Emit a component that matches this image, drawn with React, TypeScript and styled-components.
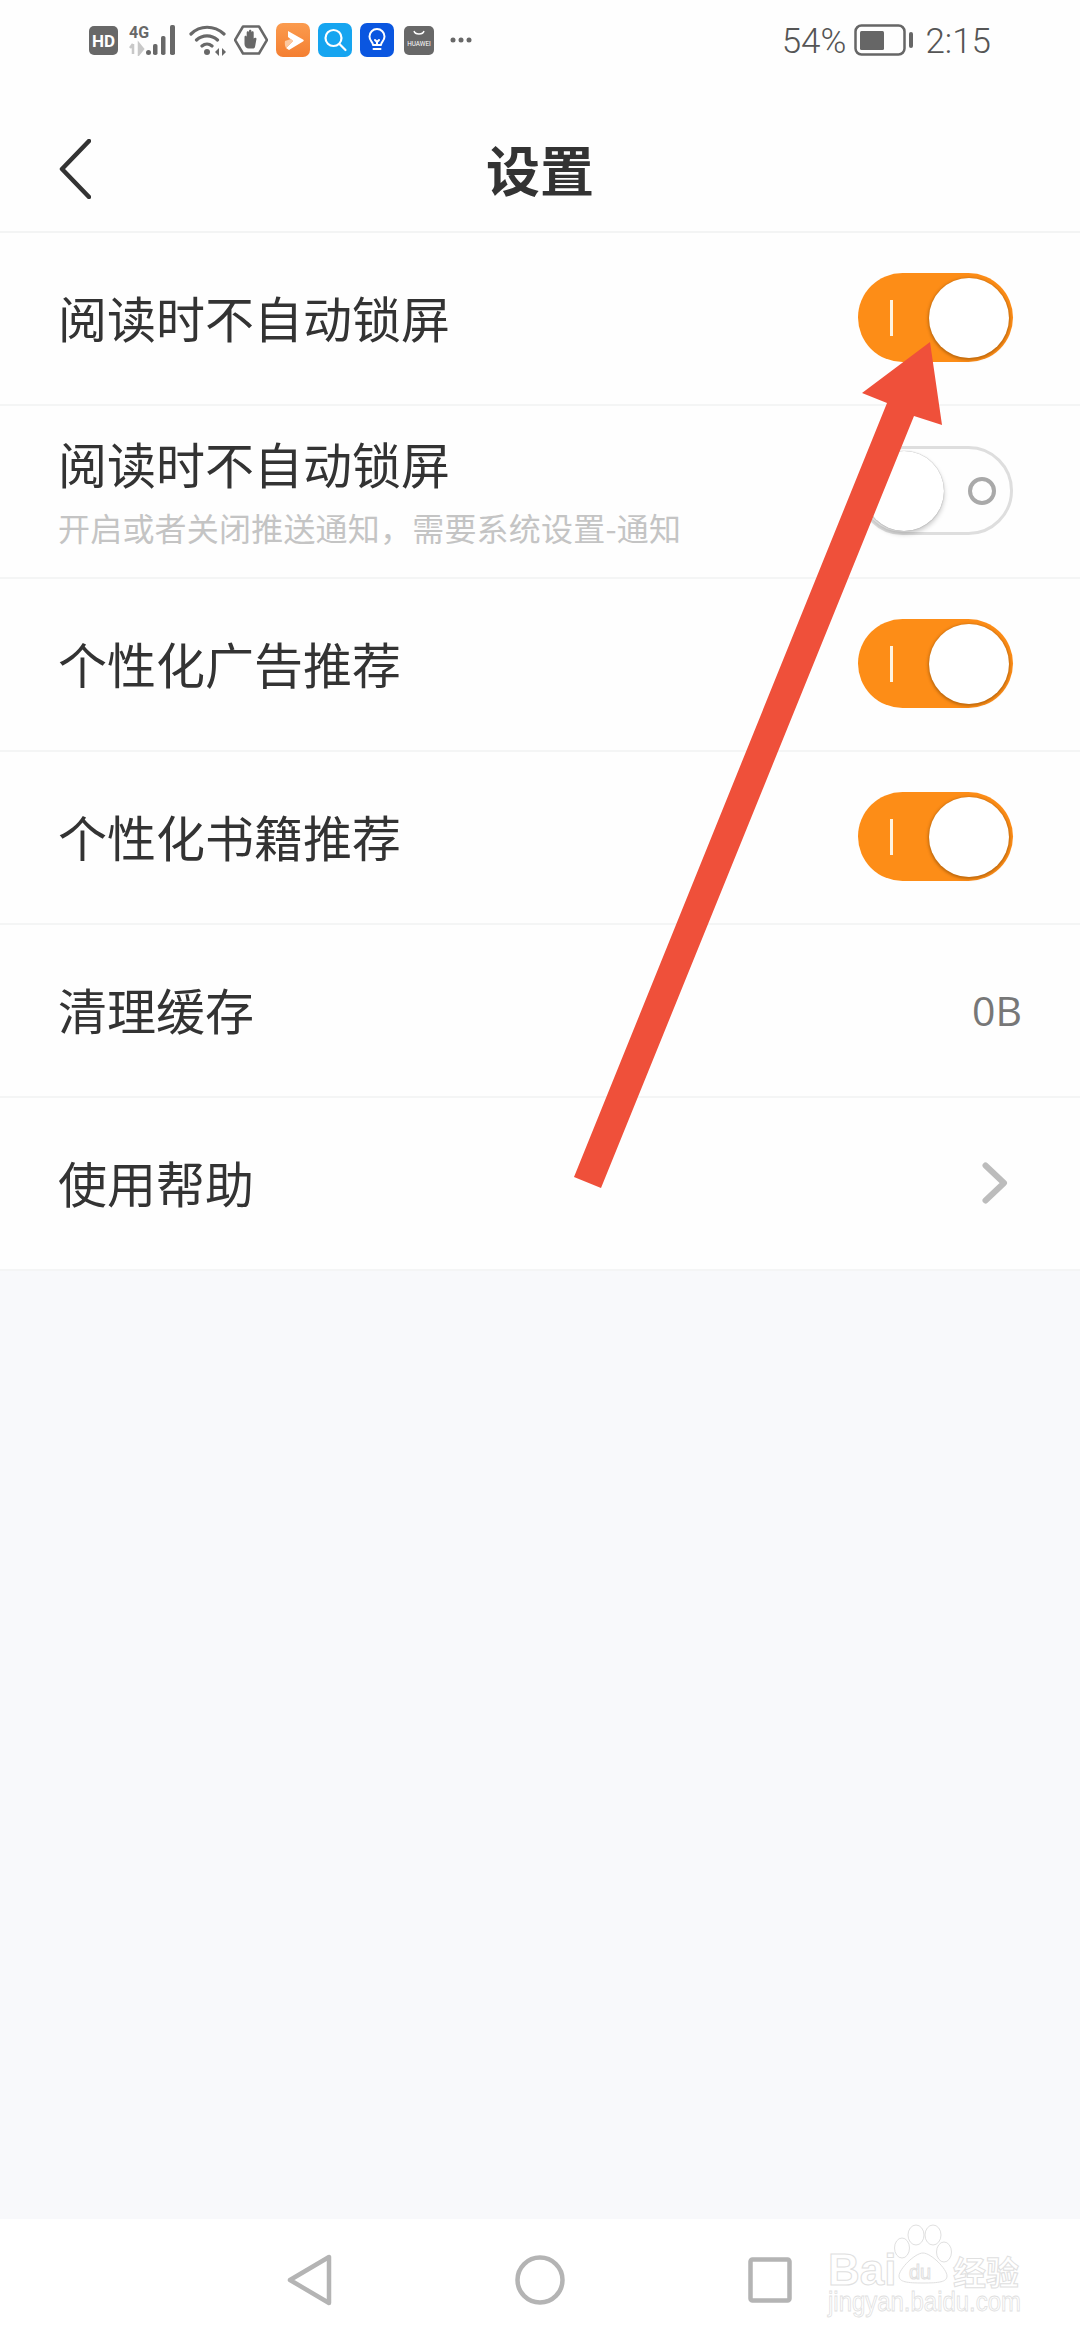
import styled, { createGlobalStyle } from 'styled-components'

const GlobalStyle = createGlobalStyle`
  html, body {
    margin: 0;
    padding: 0;
    background: #f8f9fb;
  }
  * {
    box-sizing: border-box;
  }
`

const Page = styled.div`
  position: relative;
  width: 1080px;
  height: 2340px;
  display: flex;
  flex-direction: column;
  overflow: hidden;
  background: #f8f9fb;
  font-family: 'Noto Sans CJK SC', 'Noto Sans', sans-serif;
`

const StatusBar = styled.div`
  height: 80px;
  padding: 0 89px 0 89px;
  display: flex;
  align-items: center;
  justify-content: space-between;
  background: #fefefe;
  color: #666;
`

const StatusGroup = styled.div`
  display: flex;
  align-items: center;
`

const StatusIcon = styled.svg<{ $gap?: number }>`
  display: block;
  flex: none;
  margin-left: ${p => p.$gap ?? 0}px;
`

const StatusText = styled.span`
  margin-top: 3px;
  font-family: Roboto, sans-serif;
  font-size: 35px;
  font-weight: 300;
  line-height: 40px;
  color: #555;
`

const Battery = styled.svg`
  display: block;
  margin: 0 12px 0 8px;
`

const Header = styled.header`
  height: 153px;
  padding: 26px 59px 0;
  display: grid;
  grid-template-columns: 1fr auto 1fr;
  align-items: center;
  background: #fefefe;
  border-bottom: 2px solid #f3f4f4;
`

const BackIcon = styled.svg`
  display: block;
`

const Title = styled.h1`
  margin: 0;
  font-size: 54px;
  font-weight: 700;
  line-height: 60px;
  color: #333;
`

const List = styled.div`
  display: flex;
  flex-direction: column;
  background: #fefefe;
`

const Row = styled.div`
  height: 173px;
  padding: 0 58px 2px;
  display: flex;
  align-items: center;
  justify-content: space-between;
  border-bottom: 2px solid #f4f5f5;
`

const RowText = styled.div`
  display: flex;
  flex-direction: column;
  padding-bottom: 2px;
`

const RowTitle = styled.span`
  margin-bottom: 2px;
  font-size: 49px;
  line-height: 60px;
  color: #333;
`

const RowHint = styled.span`
  margin-top: 12px;
  font-size: 32px;
  letter-spacing: 0.2px;
  line-height: 40px;
  color: #c4c4c4;
`

const RowValue = styled.span`
  font-family: 'Open Sans', sans-serif;
  font-size: 41px;
  line-height: 50px;
  color: #777;
`

const Chevron = styled.svg`
  display: block;
  margin-right: 14px;
`

const Track = styled.div<{ $on: boolean }>`
  width: 155px;
  height: 89px;
  margin-right: 9px;
  border-radius: 45px;
  display: flex;
  align-items: center;
  justify-content: space-between;
  background: ${p => (p.$on ? '#fd8d17' : '#fefefe')};
  padding: ${p => (p.$on ? '0 4px 0 32px' : '0 14px 0 3px')};
  border: ${p => (p.$on ? 'none' : '3px solid #dedede')};
`

const TrackBar = styled.span`
  width: 3px;
  height: 36px;
  background: #fff3e0;
`

const TrackRing = styled.span`
  width: 28px;
  height: 28px;
  border-radius: 50%;
  border: 4px solid #a9a9a9;
`

const Knob = styled.span<{ $on: boolean }>`
  width: 80px;
  height: 80px;
  border-radius: 50%;
  background: #fff;
  box-shadow: ${p =>
    p.$on ? '0 1px 3px 1px rgba(110, 60, 0, 0.45)' : '0 3px 5px rgba(0, 0, 0, 0.22), 0 0 1px rgba(0, 0, 0, 0.4)'};
`

const Filler = styled.div`
  flex: 1;
`

const NavBar = styled.nav`
  height: 121px;
  padding: 0 0 0 284px;
  display: flex;
  align-items: center;
  gap: 183px;
  background: #fff;
`

const NavIcon = styled.svg`
  display: block;
`

const Watermark = styled.svg`
  position: absolute;
  left: 824px;
  top: 2222px;
`

const ArrowOverlay = styled.svg`
  position: absolute;
  left: 0;
  top: 0;
  pointer-events: none;
`

const ICON = '#686868'

function Toggle({ on }: { on: boolean }) {
  return (
    <Track $on={on}>
      {on ? <TrackBar /> : <Knob $on={false} />}
      {on ? <Knob $on /> : <TrackRing />}
    </Track>
  )
}

function StatusIcons() {
  return (
    <StatusGroup>
      <StatusIcon width="29" height="29" viewBox="0 0 29 29">
        <rect width="29" height="29" rx="5" fill={ICON} />
        <text x="14.500" y="20.500" textAnchor="middle" fontFamily="Roboto" fontWeight="700" fontSize="17" fill="#fff">HD</text>
      </StatusIcon>
      <StatusIcon $gap={11} width="50" height="32" viewBox="0 0 50 32">
        <text x="0" y="14" fontFamily="Roboto" fontWeight="700" fontSize="16" fill={ICON}>4G</text>
        <path d="M4 20v10M4 20l-3 4M10 20v10l4-5z" stroke="#c8c8c8" strokeWidth="2.500" fill="#c8c8c8" />
        <circle cx="19.500" cy="28.500" r="2.500" fill={ICON} />
        <rect x="24" y="20" width="4.500" height="11" rx="1.800" fill={ICON} />
        <rect x="32" y="12" width="4.500" height="19" rx="1.800" fill={ICON} />
        <rect x="41" y="1" width="5" height="30" rx="1.800" fill={ICON} />
      </StatusIcon>
      <StatusIcon $gap={10} width="38" height="32" viewBox="0 0 38 32">
        <path d="M2 10C11 1 25 1 35 10M7.500 16c6-5.500 15-5.500 21 0M13 22c3-2.500 7-2.500 10 0" fill="none" stroke={ICON} strokeWidth="3.200" strokeLinecap="round" />
        <circle cx="18" cy="28" r="3" fill={ICON} />
        <path d="M30 24v8l-4-4zM33 24v8l4-4z" fill={ICON} />
      </StatusIcon>
      <StatusIcon $gap={7} width="34" height="30" viewBox="0 0 34 30">
        <path d="M9 1.500h16L33 15l-8 13.500H9L1 15z" fill="none" stroke={ICON} strokeWidth="2.500" strokeLinejoin="round" />
        <path d="M10.500 12c0-1.800 2.200-1.800 2.200 0V7.500c0-1.800 2.300-1.800 2.300 0V6c0-1.800 2.400-1.800 2.400 0v1.500c0-1.800 2.300-1.800 2.300 0v6c.8-1.200 3.200-.8 2.700.8L21 22c-.5 1-1.200 1.500-2.400 1.500h-3.800c-2.400 0-4.300-2-4.300-4.500z" fill={ICON} />
      </StatusIcon>
      <StatusIcon $gap={8} width="34" height="34" viewBox="0 0 34 34">
        <defs>
          <linearGradient id="playTile" x1="0" y1="0" x2="0" y2="1">
            <stop offset="0" stopColor="#fb9b4e" />
            <stop offset="1" stopColor="#f47f32" />
          </linearGradient>
        </defs>
        <rect width="34" height="34" rx="7" fill="url(#playTile)" />
        <path d="M12 8l15 8.500c1 .6 1 1.400 0 2L13 27l-3-2 7-7-5-4z" fill="#fff" />
        <path d="M9 18l6-2 2 2-7 7c-1-2-1.500-4-1-7z" fill="#fcc8a0" />
      </StatusIcon>
      <StatusIcon $gap={8} width="34" height="34" viewBox="0 0 34 34">
        <rect width="34" height="34" rx="7" fill="#16a5f0" />
        <circle cx="15.500" cy="15" r="8" fill="none" stroke="#fff" strokeWidth="2.200" />
        <path d="M21.500 21l6 6" stroke="#fff" strokeWidth="2.200" strokeLinecap="round" />
      </StatusIcon>
      <StatusIcon $gap={8} width="34" height="34" viewBox="0 0 34 34">
        <rect width="34" height="34" rx="7" fill="#0a56e0" />
        <path d="M13 22c0-3-3.500-4-3.500-8.500a7.500 7.500 0 0 1 15 0C24.500 18 21 19 21 22z" fill="none" stroke="#fff" strokeWidth="2" strokeLinejoin="round" />
        <path d="M13.500 26h7M15 17l2 2 2-2M17 19v3" fill="none" stroke="#fff" strokeWidth="2" strokeLinecap="round" />
      </StatusIcon>
      <StatusIcon $gap={10} width="30" height="29" viewBox="0 0 30 29">
        <rect width="30" height="29" rx="5" fill={ICON} />
        <path d="M10 5c1 4 9 4 10 0" fill="none" stroke="#fff" strokeWidth="1.400" />
        <text x="15" y="20" textAnchor="middle" fontFamily="Roboto" fontSize="6.400" fill="#fff">HUAWEI</text>
      </StatusIcon>
      <StatusIcon $gap={16} width="22" height="6" viewBox="0 0 22 6">
        <circle cx="3" cy="3" r="2.500" fill={ICON} />
        <circle cx="11" cy="3" r="2.500" fill={ICON} />
        <circle cx="19" cy="3" r="2.500" fill={ICON} />
      </StatusIcon>
    </StatusGroup>
  )
}

export default function App() {
  return (
    <Page>
      <GlobalStyle />
      <StatusBar>
        <StatusIcons />
        <StatusGroup>
          <StatusText>54%</StatusText>
          <Battery width="59" height="32" viewBox="0 0 59 32">
            <rect x="1.500" y="1.500" width="49" height="29" rx="6" fill="none" stroke="#666" strokeWidth="2.500" />
            <rect x="6" y="7" width="24" height="19" rx="1.500" fill="#666" />
            <rect x="55" y="8" width="4" height="16" rx="2" fill="#666" />
          </Battery>
          <StatusText>2:15</StatusText>
        </StatusGroup>
      </StatusBar>
      <Header>
        <BackIcon width="32" height="60" viewBox="0 0 32 60">
          <path d="M30 2L3 30l27 28" fill="none" stroke="#333" strokeWidth="4.500" strokeLinecap="round" strokeLinejoin="round" />
        </BackIcon>
        <Title>设置</Title>
      </Header>
      <List>
        <Row>
          <RowTitle>阅读时不自动锁屏</RowTitle>
          <Toggle on />
        </Row>
        <Row>
          <RowText>
            <RowTitle>阅读时不自动锁屏</RowTitle>
            <RowHint>开启或者关闭推送通知，需要系统设置-通知</RowHint>
          </RowText>
          <Toggle on={false} />
        </Row>
        <Row>
          <RowTitle>个性化广告推荐</RowTitle>
          <Toggle on />
        </Row>
        <Row>
          <RowTitle>个性化书籍推荐</RowTitle>
          <Toggle on />
        </Row>
        <Row>
          <RowTitle>清理缓存</RowTitle>
          <RowValue>0B</RowValue>
        </Row>
        <Row>
          <RowTitle>使用帮助</RowTitle>
          <Chevron width="26" height="42" viewBox="0 0 26 42">
            <path d="M3.500 3.500L22 21 3.500 38.500" fill="none" stroke="#bcbcbc" strokeWidth="6" strokeLinecap="round" strokeLinejoin="round" />
          </Chevron>
        </Row>
      </List>
      <Filler />
      <NavBar>
        <NavIcon width="48" height="52" viewBox="0 0 48 52">
          <path d="M45 3v46L6 26z" fill="none" stroke="#b4b4b4" strokeWidth="4.500" strokeLinejoin="round" />
        </NavIcon>
        <NavIcon width="50" height="50" viewBox="0 0 50 50">
          <circle cx="25" cy="25" r="22.500" fill="none" stroke="#b4b4b4" strokeWidth="4.500" />
        </NavIcon>
        <NavIcon width="44" height="46" viewBox="0 0 44 46">
          <rect x="2.500" y="2.500" width="39" height="41" rx="2" fill="none" stroke="#b4b4b4" strokeWidth="4.500" />
        </NavIcon>
      </NavBar>
      <Watermark width="204" height="100" viewBox="0 0 204 100">
        <g fill="#fff" stroke="#e0e0e0" strokeWidth="1">
          <text x="4" y="63" fontFamily="Liberation Sans" fontWeight="700" fontSize="44">Bai</text>
          <ellipse cx="78" cy="26" rx="7.500" ry="10" />
          <ellipse cx="92" cy="13" rx="8" ry="10" />
          <ellipse cx="109" cy="13" rx="8" ry="10" />
          <ellipse cx="120" cy="30" rx="7.500" ry="10" />
          <path d="M99 31c8 0 24 16 24 23 0 6-8 7-24 7s-24-1-24-7c0-7 16-23 24-23z" />
          <text x="85" y="57" fontFamily="Liberation Sans" fontSize="20">du</text>
          <text x="129" y="63" fontFamily="Noto Sans CJK SC" fontWeight="700" fontSize="33">经验</text>
          <text x="4" y="89" fontFamily="Liberation Sans" fontSize="27" textLength="193" lengthAdjust="spacingAndGlyphs" strokeWidth="0.800">jingyan.baidu.com</text>
        </g>
      </Watermark>
      <ArrowOverlay width="1080" height="2340" viewBox="0 0 1080 2340">
        <path d="M930 342L862 393L887 403L574 1177L601 1188L914 416L942 425Z" fill="#ef503a" />
      </ArrowOverlay>
    </Page>
  )
}
